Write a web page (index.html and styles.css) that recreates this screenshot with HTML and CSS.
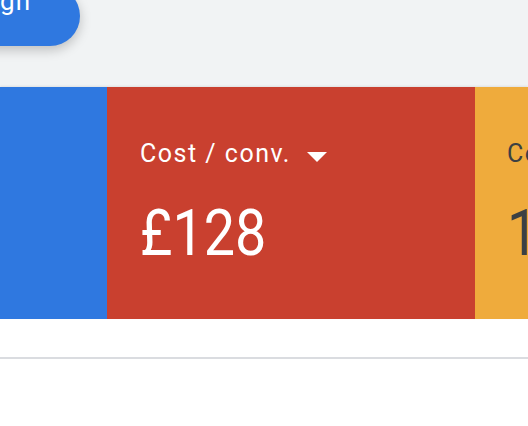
FILE: index.html
```html
<!DOCTYPE html>
<html lang="en">
<head>
<meta charset="utf-8">
<link rel="stylesheet" href="styles.css">
</head>
<body>
<div class="page">
  <header class="top">
    <div class="fab">Campaign</div>
  </header>
  <section class="cards">
    <div class="card card-blue"></div>
    <div class="card card-red">
      <div class="label">Cost / conv.<svg class="caret" width="20" height="10" viewBox="0 0 20 10"><polygon points="0,0 20,0 10,10" fill="#fff"/></svg></div>
      <div class="value"><span class="num">£128</span></div>
    </div>
    <div class="card card-yellow">
      <div class="label">Conversions</div>
      <div class="value"><span class="num">12</span></div>
    </div>
  </section>
  <div class="below"></div>
</div>
</body>
</html>
```

FILE: styles.css
```css
html, body {
  margin: 0;
  padding: 0;
}
body {
  width: 528px;
  height: 426px;
  overflow: hidden;
  background: #ffffff;
  font-family: Roboto, "Noto Sans", sans-serif;
}
.page {
  display: flex;
  flex-direction: column;
  width: 528px;
}
.top {
  height: 87px;
  background: #f1f3f4;
  display: flex;
  align-items: flex-start;
}
.fab {
  margin-top: -14px;
  margin-left: -90px;
  height: 60px;
  width: 170px;
  box-sizing: border-box;
  padding-right: 49px;
  background: #2f78e0;
  border-radius: 0 30px 30px 30px;
  box-shadow: 0 4px 12px rgba(0, 0, 0, 0.22);
  color: #fff;
  font-size: 26px;
  letter-spacing: 1px;
  line-height: 30px;
  display: flex;
  justify-content: flex-end;
  align-items: flex-start;
}
.cards {
  display: flex;
  height: 232px;
  box-shadow: 0 -1px 2px rgba(0, 0, 0, 0.08);
  position: relative;
}
.card {
  box-sizing: border-box;
  padding-top: 52px;
  flex: none;
}
.card-blue {
  width: 107px;
  background: #2f78e0;
}
.card-red {
  width: 368px;
  background: #c9402f;
  color: #ffffff;
  padding-left: 33px;
}
.card-yellow {
  width: 200px;
  background: #efab3c;
  color: #3c4043;
  padding-left: 32px;
}
.label {
  display: flex;
  align-items: center;
  font-size: 25px;
  line-height: 30px;
  letter-spacing: 1.5px;
  white-space: nowrap;
}
.caret {
  margin-left: 16px;
  margin-top: 5px;
}
.value {
  margin-top: 33px;
  font-size: 64px;
  line-height: 64px;
  white-space: nowrap;
}
.num {
  display: inline-block;
  transform: scaleX(0.87);
  transform-origin: left center;
}
.below {
  height: 38px;
  border-bottom: 2px solid #dadce0;
}
```
